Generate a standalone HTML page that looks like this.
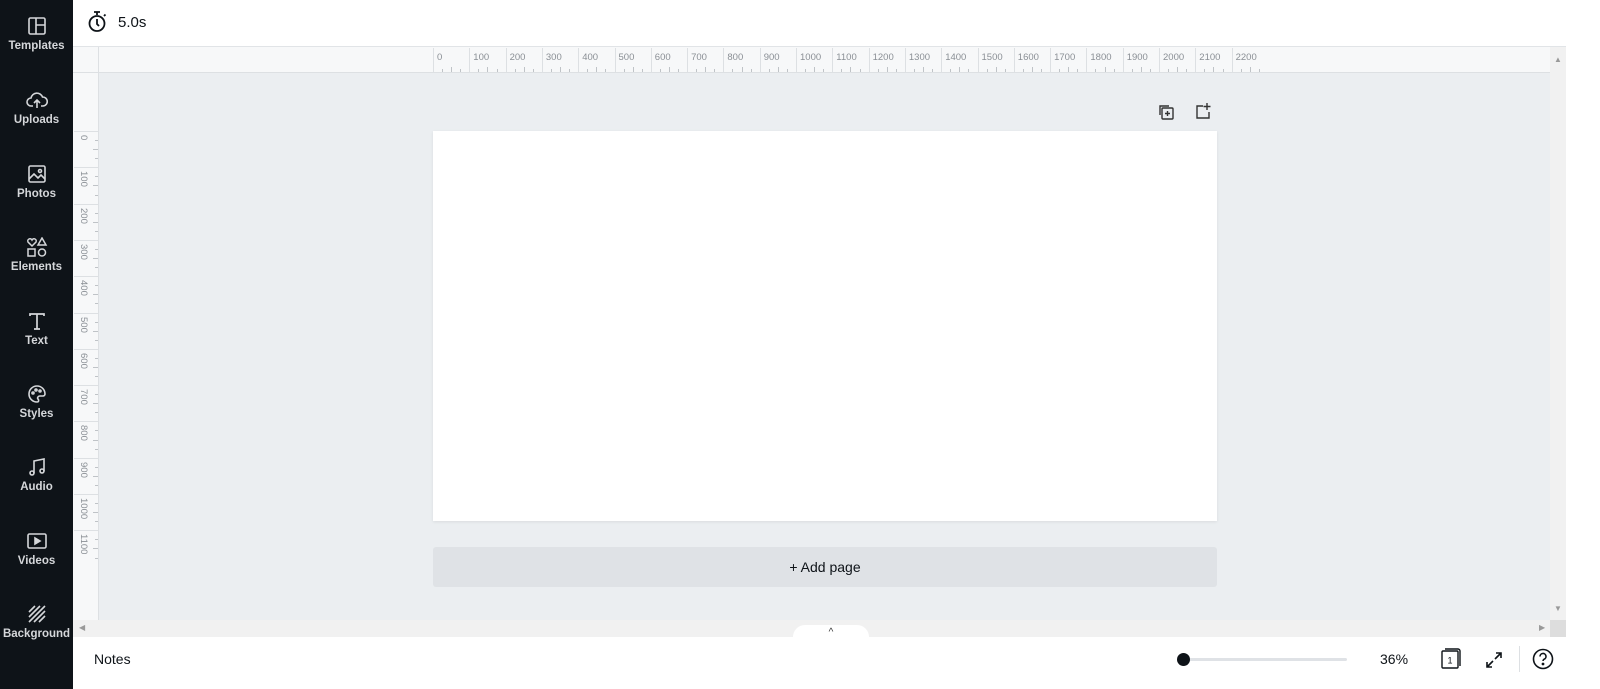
<!DOCTYPE html>
<html><head><meta charset="utf-8"><style>
*{margin:0;padding:0;box-sizing:border-box}
body{width:1600px;height:689px;overflow:hidden;font-family:"Liberation Sans",sans-serif;background:#fff;position:relative}
.side{position:absolute;left:0;top:0;width:73px;height:689px;background:#0e1318}
.it{position:absolute;left:0;width:73px;text-align:center;color:#d5d7da;font-size:11.5px;font-weight:bold}
.it svg{display:block;margin:0 auto 4px}
.abs{position:absolute}
.rl{font-size:9.5px;color:#8a8f95}
</style></head><body>
<div class="side">
<div class="it" style="top:16px"><svg width="20" height="20" viewBox="0 0 20 20" fill="none" stroke="#d5d7da" stroke-width="1.6"><rect x="2" y="2" width="16" height="16" rx="1.5"/><path d="M9 2v16M9 9h9"/></svg>Templates</div>
<div class="it" style="top:90px"><svg width="22" height="20" viewBox="0 0 22 20" fill="none" stroke="#d5d7da" stroke-width="1.6"><path d="M7 16H5a4 4 0 0 1 0-8 6 6 0 0 1 11.5-1A4.5 4.5 0 0 1 17 16h-2M11 18v-8M8 13l3-3 3 3"/></svg>Uploads</div>
<div class="it" style="top:164px"><svg width="20" height="20" viewBox="0 0 20 20" fill="none" stroke="#d5d7da" stroke-width="1.6"><rect x="2" y="2" width="16" height="16" rx="1.5"/><path d="M2 15l5-5 4 4 3-3 4 4"/><circle cx="13" cy="7" r="1.5"/></svg>Photos</div>
<div class="it" style="top:237px"><svg width="22" height="20" viewBox="0 0 22 20" fill="none" stroke="#d5d7da" stroke-width="1.5"><path d="M6 9L2 5a2 2 0 0 1 4-2 2 2 0 0 1 4 2z"/><path d="M16 1l4 7h-8z"/><rect x="2" y="12" width="7" height="7"/><circle cx="16" cy="15.5" r="3.5"/></svg>Elements</div>
<div class="it" style="top:311px"><svg width="20" height="20" viewBox="0 0 20 20" fill="none" stroke="#d5d7da" stroke-width="1.7"><path d="M3 5V3h14v2M10 3v15M7 18h6"/></svg>Text</div>
<div class="it" style="top:384px"><svg width="20" height="20" viewBox="0 0 20 20" fill="none" stroke="#d5d7da" stroke-width="1.6"><path d="M10 2a8 8 0 0 0 0 16c2 0 2-2 1-3s0-3 2-3h3a2 2 0 0 0 2-2 8 8 0 0 0-8-8z"/><circle cx="6" cy="9" r="1"/><circle cx="9" cy="6" r="1"/><circle cx="13" cy="7" r="1"/></svg>Styles</div>
<div class="it" style="top:457px"><svg width="20" height="20" viewBox="0 0 20 20" fill="none" stroke="#d5d7da" stroke-width="1.6"><path d="M7 16V4l10-2v12"/><circle cx="5" cy="16" r="2"/><circle cx="15" cy="14" r="2"/></svg>Audio</div>
<div class="it" style="top:531px"><svg width="22" height="20" viewBox="0 0 22 20" fill="none" stroke="#d5d7da" stroke-width="1.6"><rect x="2" y="3" width="18" height="14" rx="1.5"/><path d="M9 7v6l5-3z" fill="#d5d7da"/></svg>Videos</div>
<div class="it" style="top:604px"><svg width="20" height="20" viewBox="0 0 20 20" fill="none" stroke="#d5d7da" stroke-width="1.6"><path d="M2 8l6-6M2 13L13 2M2 18L18 2M7 18L18 7M12 18l6-6"/></svg>Background</div>
</div>
<svg class="abs" style="left:88px;top:11px" width="20" height="22" viewBox="0 0 20 22" fill="none" stroke="#0e1318" stroke-width="1.8"><path d="M6 1h6M9 1v3"/><circle cx="9" cy="12.5" r="7.5"/><path d="M9 8v5l2 2M16 5l1.5-1.5"/></svg>
<div class="abs" style="left:118px;top:14px;font-size:15px;color:#0e1318">5.0s</div>
<div class="abs" style="left:73px;top:46px;width:1493px;height:1px;background:#e1e4e7"></div>
<div class="abs" style="left:73px;top:47px;width:1477px;height:26px;background:#f7f8f9;border-bottom:1px solid #dde0e3"></div>
<div class="abs" style="left:73px;top:73px;width:26px;height:547px;background:#f7f8f9;border-right:1px solid #dde0e3"></div>
<div class="abs" style="left:98px;top:47px;width:1px;height:26px;background:#dde0e3"></div>
<div class="abs" style="left:99px;top:73px;width:1451px;height:547px;background:#ebeef1"></div>
<div id="hr"></div>
<div class="abs" style="left:1550px;top:47px;width:16px;height:573px;background:#f1f1f1"></div>
<div class="abs" style="left:1554px;top:55px;font-size:8px;color:#999">▲</div>
<div class="abs" style="left:1554px;top:604px;font-size:8px;color:#999">▼</div>
<div class="abs" style="left:73px;top:620px;width:1477px;height:17px;background:#f1f1f1"></div>
<div class="abs" style="left:1550px;top:620px;width:16px;height:17px;background:#ddd"></div>
<div class="abs" style="left:79px;top:623px;font-size:8px;color:#999">◀</div>
<div class="abs" style="left:1539px;top:623px;font-size:8px;color:#999">▶</div>
<div class="abs" style="left:433px;top:131px;width:784px;height:390px;background:#fff;box-shadow:0 1px 3px rgba(0,0,0,.08)"></div>
<svg class="abs" style="left:1157px;top:103px" width="18" height="18" viewBox="0 0 18 18" fill="none" stroke="#333" stroke-width="1.4"><rect x="5" y="5" width="11" height="11" rx="1"/><path d="M3 12V3h9M10.5 8v5M8 10.5h5"/></svg>
<svg class="abs" style="left:1194px;top:102px" width="18" height="18" viewBox="0 0 18 18" fill="none" stroke="#333" stroke-width="1.4"><path d="M9 4H3v12h12v-6M13 1v7M9.5 4.5h7"/></svg>
<div class="abs" style="left:433px;top:547px;width:784px;height:40px;background:#dfe2e6;border-radius:3px;text-align:center;line-height:40px;font-size:14px;color:#0e1318">+ Add page</div>
<div class="abs" style="left:73px;top:637px;width:1527px;height:52px;background:#fff"></div>
<div class="abs" style="left:793px;top:625px;width:76px;height:14px;background:#fff;border-radius:12px 12px 0 0;text-align:center;font-size:10px;color:#333;line-height:16px">^</div>
<div class="abs" style="left:94px;top:651px;font-size:14px;color:#0e1318">Notes</div>
<div class="abs" style="left:1184px;top:658px;width:163px;height:3px;background:#dfe2e6;border-radius:2px"></div>
<div class="abs" style="left:1177px;top:653px;width:13px;height:13px;background:#0e1318;border-radius:50%"></div>
<div class="abs" style="left:1380px;top:651px;font-size:14px;color:#0e1318">36%</div>
<svg class="abs" style="left:1440px;top:647px" width="24" height="24" viewBox="0 0 24 24" fill="none" stroke="#0e1318" stroke-width="1.4"><path d="M5 2h13a2 2 0 0 1 2 2v15"/><rect x="2" y="4" width="16" height="17" rx="1"/><text x="10" y="16.5" font-size="9" text-anchor="middle" stroke="none" fill="#0e1318" font-family="Liberation Sans">1</text></svg>
<svg class="abs" style="left:1484px;top:650px" width="20" height="20" viewBox="0 0 20 20" fill="none" stroke="#0e1318" stroke-width="1.6"><path d="M11 9l6-6M12 3h5v5M9 11l-6 6M3 12v5h5"/></svg>
<div class="abs" style="left:1519px;top:646px;width:1px;height:26px;background:#dde0e3"></div>
<svg class="abs" style="left:1532px;top:648px" width="22" height="22" viewBox="0 0 22 22" fill="none" stroke="#0e1318" stroke-width="1.6"><circle cx="11" cy="11" r="9.5"/><path d="M8 8.5a3 3 0 1 1 4 2.8c-.7.4-1 .9-1 1.7"/><circle cx="11" cy="16" r=".6" fill="#0e1318"/></svg>
<script>
var h='';
for(var i=0;i<=22;i++){var x=433+i*36.3;
h+='<div class="abs" style="left:'+x+'px;top:48px;width:1px;height:24px;background:#dde0e3"></div>';
h+='<div class="abs rl" style="left:'+(x+4)+'px;top:52px">'+(i*100)+'</div>';
for(var k=1;k<4;k++)h+='<div class="abs" style="left:'+(x+k*9.07)+'px;top:'+(k==2?67:69)+'px;width:1px;height:'+(k==2?5:3)+'px;background:#bfc3c7"></div>';}
for(var i=0;i<=11;i++){var y=131+i*36.3;
h+='<div class="abs" style="left:74px;top:'+y+'px;width:24px;height:1px;background:#dde0e3"></div>';
h+='<div class="abs rl" style="left:77px;top:'+(y+4)+'px;transform-origin:0 0;transform:rotate(90deg) translate(0,-12px);white-space:nowrap">'+(i*100)+'</div>';
for(var k=1;k<4;k++)h+='<div class="abs" style="left:'+(k==2?93:95)+'px;top:'+(y+k*9.07)+'px;height:1px;width:'+(k==2?5:3)+'px;background:#bfc3c7"></div>';}
document.getElementById('hr').innerHTML=h;
</script>
</body></html>
